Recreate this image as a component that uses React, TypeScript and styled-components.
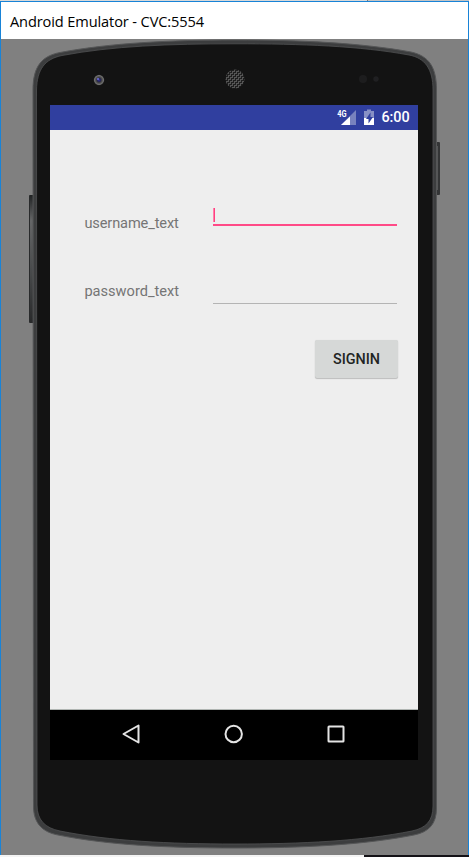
import React from "react";
import styled, { createGlobalStyle } from "styled-components";

const GlobalStyle = createGlobalStyle`
  * { box-sizing: border-box; }
  body { margin: 0; background: #fff; overflow: hidden; }
`;

const Desktop = styled.main`
  width: 469px;
  height: 857px;
  display: flex;
  flex-direction: column;
`;

const TopEdge = styled.div`
  height: 1px;
  background: linear-gradient(90deg, #d9d9d9 367px, #777 367px, #777 368px, #c4c4c4 368px);
`;

const BottomEdge = styled.div`
  height: 2px;
  background: linear-gradient(90deg, #f4f4f4 364px, #141217 364px);
`;

const EmulatorWindow = styled.section`
  height: 854px;
  display: flex;
  flex-direction: column;
  border: 1px solid #1883d7;
  border-bottom: 0;
`;

const TitleBar = styled.header`
  height: 37px;
  flex: none;
  display: flex;
  align-items: center;
  padding: 1px 0 0 9px;
  background: #fff;
  color: #000;
  font: 14.6px/20px "Open Sans", sans-serif;
  letter-spacing: -0.12px;
  white-space: nowrap;
`;

const DeviceStage = styled.div`
  position: relative;
  flex: 1;
  padding: 66px 50px 0 49px;
  background: #808080;
`;

const DeviceArt = styled.svg`
  position: absolute;
  left: -1px;
  top: 0;
  display: block;
`;

const Screen = styled.div`
  position: relative;
  width: 368px;
  height: 655px;
  display: flex;
  flex-direction: column;
  background: #eee;
  font-family: Roboto, sans-serif;
`;

const StatusBar = styled.div`
  height: 25px;
  flex: none;
  display: flex;
  justify-content: flex-end;
  background: #303f9f;
  color: #fff;
`;

const StatusIcons = styled.svg`
  width: 45px;
  height: 25px;
`;

const Clock = styled.span`
  width: 37px;
  padding-left: 0.4px;
  font-size: 14.4px;
  font-weight: 500;
  line-height: 26px;
`;

const Form = styled.form`
  flex: 1;
  display: flex;
  flex-direction: column;
  padding: 73px 20px 0 34px;
`;

const FieldRow = styled.label<{ $height: number }>`
  height: ${(p) => p.$height}px;
  display: flex;
  align-items: flex-start;
`;

const Label = styled.span<{ $tracking?: number }>`
  width: 129px;
  padding: 11px 0 0 0.4px;
  color: #757575;
  font-size: 14.6px;
  line-height: 18px;
  letter-spacing: ${(p) => p.$tracking ?? 0}px;
  white-space: nowrap;
`;

const Field = styled.span<{ $active?: boolean }>`
  width: 184px;
  height: ${(p) => (p.$active ? 23 : 33)}px;
  display: flex;
  align-items: flex-start;
  padding-top: 5px;
  border-bottom: ${(p) => (p.$active ? "2px solid #ff4a87" : "1px solid #b4b4b4")};
`;

const Caret = styled.span`
  width: 2px;
  height: 14px;
  background: linear-gradient(90deg, #ff80aa 50%, #ff4081 50%);
`;

const SignInButton = styled.button`
  width: 83px;
  height: 38px;
  align-self: flex-end;
  padding: 0;
  border: 0;
  border-radius: 2px;
  background: #d6d8d7;
  box-shadow: 0 1px 1px rgba(0, 0, 0, 0.2), 0 0 1px rgba(0, 0, 0, 0.1);
  color: #222423;
  font: 500 14.4px/38px Roboto, sans-serif;
  padding-top: 1px;
`;

const NavBar = styled.nav`
  height: 51px;
  flex: none;
  display: flex;
  justify-content: center;
  align-items: center;
  gap: 78px;
  padding-bottom: 2px;
  background: #000;
  border-top: 1px solid #b0b5b2;
`;

const NavIcon = styled.svg`
  width: 24px;
  height: 24px;
  fill: none;
  stroke: #e4e4e4;
  stroke-width: 2;
  stroke-linejoin: round;
`;

const OUTLINE =
  "M33 51 C33 27 42 17 60 13.5 C110 4 170 1 235 1 C302 1 362 4 411 13 C429 17 436.5 28 436.5 51 V769 C436.5 785 429 793 414 796 C363 806 303 809 235 809 C166 809 108 806 58 796 C42 793 33.5 784 33.5 767 Z";
const FACE =
  "M36.5 51 C37 30 45 20 62 16.5 C112 7 170 4.8 235 4.8 C302 4.8 360 7 409 16 C425 19 433 30 433 51 V767 C433 782 426 789 412 792 C362 802 302 805 235 805 C168 805 110 802 60 792 C45 789 37 781 37 766 Z";

function Device() {
  return (
    <DeviceArt width="469" height="816" viewBox="0 0 469 816">
      <defs>
        <linearGradient id="volume" x1="0" y1="0" x2="0" y2="1">
          <stop offset="0" stopColor="#202223" />
          <stop offset=".2" stopColor="#656667" />
          <stop offset=".6" stopColor="#484a4b" />
          <stop offset="1" stopColor="#28292a" />
        </linearGradient>
        <radialGradient id="lens">
          <stop offset="0" stopColor="#3030a0" />
          <stop offset=".35" stopColor="#26264c" />
          <stop offset=".55" stopColor="#484848" />
          <stop offset=".85" stopColor="#707070" />
          <stop offset="1" stopColor="#333" />
        </radialGradient>
        <pattern id="mesh" width="4" height="4" patternUnits="userSpaceOnUse">
          <rect width="4" height="4" fill="#1e1e1e" />
          <path d="M0 .5H3M2 2.5H4M0 2.5H1M.5 0V2M2.5 2V4" stroke="#555" />
        </pattern>
      </defs>
      <rect x="29" y="156" width="5" height="128" rx="1" fill="url(#volume)" />
      <path d="M29.5 157V283" stroke="#292b2c" />
      <rect x="436" y="103" width="4" height="53" rx="1" fill="#343536" />
      <path d="M437.5 107V151" stroke="#555657" />
      <path d={OUTLINE} fill="#3c3d3e" stroke="#555657" strokeWidth="1" />
      <path d={FACE} fill="#131313" stroke="#515253" strokeWidth=".8" />
      <circle cx="99" cy="41" r="5.3" fill="url(#lens)" />
      <circle cx="98" cy="40" r="1" fill="#7070df" />
      <circle cx="235" cy="40" r="9.5" fill="url(#mesh)" />
      <circle cx="363" cy="40" r="4" fill="#1d1d1e" />
      <circle cx="376" cy="40" r="2.7" fill="#202022" />
    </DeviceArt>
  );
}

export default function App() {
  return (
    <Desktop>
      <GlobalStyle />
      <TopEdge />
      <EmulatorWindow>
        <TitleBar>Android Emulator - CVC:5554</TitleBar>
        <DeviceStage>
          <Device />
          <Screen>
            <StatusBar>
              <StatusIcons viewBox="336 105 45 25">
                <text x="337.2" y="117" fontFamily="Roboto" fontSize="8.4" fontWeight="700" fill="#fff" textLength="9.3" lengthAdjust="spacingAndGlyphs">4G</text>
                <path d="M356 110V125H341L348.5 117.5Z" fill="#7882be" />
                <path d="M350 116.5V125H341Z" fill="#fff" />
                <path d="M364 111H367V109.5H371V111H374V125H364Z" fill="#8790c5" />
                <path d="M364 118H374V125H364Z" fill="#fff" />
                <path d="M370.5 112.5L366 119H368.5V123.5L373 117H370.5Z" fill="#303f9f" />
              </StatusIcons>
              <Clock>6:00</Clock>
            </StatusBar>
            <Form onSubmit={(e) => e.preventDefault()}>
              <FieldRow $height={68}>
                <Label $tracking={-0.12}>username_text</Label>
                <Field $active><Caret /></Field>
              </FieldRow>
              <FieldRow $height={69}>
                <Label>password_text</Label>
                <Field />
              </FieldRow>
              <SignInButton type="submit">SIGNIN</SignInButton>
            </Form>
            <NavBar>
              <NavIcon viewBox="0 0 24 24"><path d="M3.5 12L18.5 3.5V20.5Z" /></NavIcon>
              <NavIcon viewBox="0 0 24 24"><circle cx="11.7" cy="12" r="8.2" /></NavIcon>
              <NavIcon viewBox="0 0 24 24"><rect x="4.5" y="4.5" width="15" height="15" rx=".5" /></NavIcon>
            </NavBar>
          </Screen>
        </DeviceStage>
      </EmulatorWindow>
      <BottomEdge />
    </Desktop>
  );
}
